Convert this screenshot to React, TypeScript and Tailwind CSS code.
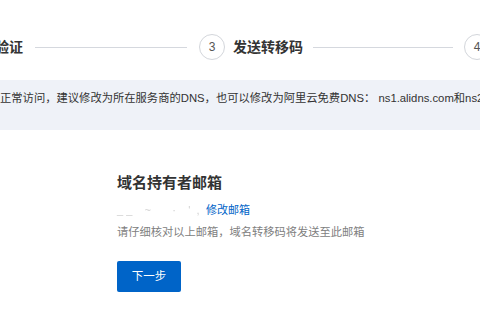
export default function App() {
  return (
    <div
      className="w-[480px] h-[320px] overflow-hidden bg-white"
      style={{ fontFamily: '"Liberation Sans", "Noto Sans CJK SC", sans-serif' }}
    >
      {/* steps */}
      <div className="flex items-center pt-[34px] -ml-[33px] whitespace-nowrap">
        <span className="shrink-0 text-[14px] leading-[20px] font-semibold text-[#333]">邮箱验证</span>
        <div className="shrink-0 ml-[12px] w-[152px] h-px bg-[#d5d8de]" />
        <div className="ml-[12px] w-[26px] h-[26px] shrink-0 rounded-full border border-[#d3d6db] flex items-center justify-center text-[12px] text-[#555]">
          3
        </div>
        <span className="shrink-0 ml-[8px] text-[14px] leading-[20px] font-semibold text-[#333]">发送转移码</span>
        <div className="shrink-0 ml-[10px] w-[140px] h-px bg-[#d5d8de]" />
        <div className="ml-[11px] w-[26px] h-[26px] shrink-0 rounded-full border border-[#d3d6db] flex items-center justify-center text-[12px] text-[#555]">
          4
        </div>
      </div>

      {/* notice */}
      <div className="mt-[20px] h-[50px] bg-[#eff2f8] pt-[8px] whitespace-nowrap">
        <p className="text-[11.3px] leading-[20px] text-[#333]">
          正常访问，建议修改为所在服务商的DNS，也可以修改为阿里云免费DNS： ns1.alidns.com和ns2.alidns.com
        </p>
      </div>

      {/* content */}
      <div className="pl-[117px] mt-[42px]">
        <h2 className="text-[15px] leading-[22px] font-semibold text-[#333]">域名持有者邮箱</h2>
        <div className="mt-[7px] flex items-center h-[18px] text-[11px]">
          <span className="w-[89px] whitespace-pre text-[#d0d0d0] blur-[0.4px]">
            {"_ _    ~       ·    '  ,"}
          </span>
          <span className="text-[#0064c8]">修改邮箱</span>
        </div>
        <p className="mt-[4px] text-[11.25px] leading-[18px] text-[#808080]">
          请仔细核对以上邮箱，域名转移码将发送至此邮箱
        </p>
        <button className="mt-[20px] w-[64px] h-[31px] rounded-[2px] bg-[#0064c8] text-white text-[11.5px] flex items-center justify-center">
          下一步
        </button>
      </div>
    </div>
  )
}
